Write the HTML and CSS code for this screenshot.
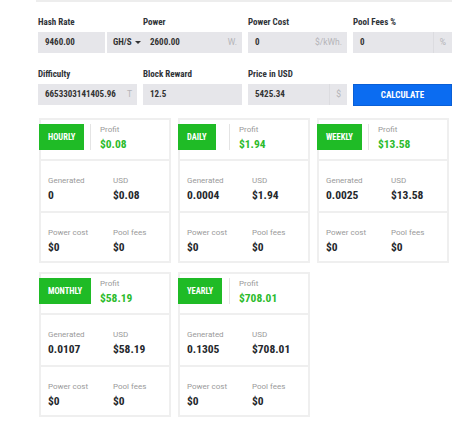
FILE: index.html
```html
<!DOCTYPE html>
<html>
<head>
<meta charset="utf-8">
<link rel="stylesheet" href="styles.css">
</head>
<body>
<div class="topline"></div>
<div class="form">
  <div class="field">
    <div class="label">Hash Rate</div>
    <div class="group">
      <div class="input grow">9460.00</div>
      <div class="select">GH/S <span class="caret"></span></div>
    </div>
  </div>
  <div class="field">
    <div class="label">Power</div>
    <div class="group">
      <div class="input grow">2600.00</div>
      <div class="addon">W.</div>
    </div>
  </div>
  <div class="field">
    <div class="label">Power Cost</div>
    <div class="group">
      <div class="input grow">0</div>
      <div class="addon">$/kWh.</div>
    </div>
  </div>
  <div class="field">
    <div class="label">Pool Fees %</div>
    <div class="group">
      <div class="input grow">0</div>
      <div class="addon sep">%</div>
    </div>
  </div>
  <div class="field">
    <div class="label">Difficulty</div>
    <div class="group">
      <div class="input grow">6653303141405.96</div>
      <div class="addon">T</div>
    </div>
  </div>
  <div class="field">
    <div class="label">Block Reward</div>
    <div class="group">
      <div class="input grow">12.5</div>
    </div>
  </div>
  <div class="field">
    <div class="label">Price in USD</div>
    <div class="group">
      <div class="input grow">5425.34</div>
      <div class="addon sep">$</div>
    </div>
  </div>
  <div class="field end">
    <div class="button">CALCULATE</div>
  </div>
</div>

<div class="cards">
  <div class="card">
    <div class="head">
      <div class="badge-wrap"><div class="badge">HOURLY</div></div>
      <div class="profit"><div class="small">Profit</div><div class="green">$0.08</div></div>
    </div>
    <div class="sec">
      <div class="cell"><div class="small">Generated</div><div class="val">0</div></div>
      <div class="cell"><div class="small">USD</div><div class="val">$0.08</div></div>
    </div>
    <div class="sec">
      <div class="cell"><div class="small">Power cost</div><div class="val">$0</div></div>
      <div class="cell"><div class="small">Pool fees</div><div class="val">$0</div></div>
    </div>
  </div>
  <div class="card">
    <div class="head">
      <div class="badge-wrap"><div class="badge">DAILY</div></div>
      <div class="profit"><div class="small">Profit</div><div class="green">$1.94</div></div>
    </div>
    <div class="sec">
      <div class="cell"><div class="small">Generated</div><div class="val">0.0004</div></div>
      <div class="cell"><div class="small">USD</div><div class="val">$1.94</div></div>
    </div>
    <div class="sec">
      <div class="cell"><div class="small">Power cost</div><div class="val">$0</div></div>
      <div class="cell"><div class="small">Pool fees</div><div class="val">$0</div></div>
    </div>
  </div>
  <div class="card">
    <div class="head">
      <div class="badge-wrap"><div class="badge">WEEKLY</div></div>
      <div class="profit"><div class="small">Profit</div><div class="green">$13.58</div></div>
    </div>
    <div class="sec">
      <div class="cell"><div class="small">Generated</div><div class="val">0.0025</div></div>
      <div class="cell"><div class="small">USD</div><div class="val">$13.58</div></div>
    </div>
    <div class="sec">
      <div class="cell"><div class="small">Power cost</div><div class="val">$0</div></div>
      <div class="cell"><div class="small">Pool fees</div><div class="val">$0</div></div>
    </div>
  </div>
  <div class="card">
    <div class="head">
      <div class="badge-wrap"><div class="badge">MONTHLY</div></div>
      <div class="profit"><div class="small">Profit</div><div class="green">$58.19</div></div>
    </div>
    <div class="sec">
      <div class="cell"><div class="small">Generated</div><div class="val">0.0107</div></div>
      <div class="cell"><div class="small">USD</div><div class="val">$58.19</div></div>
    </div>
    <div class="sec">
      <div class="cell"><div class="small">Power cost</div><div class="val">$0</div></div>
      <div class="cell"><div class="small">Pool fees</div><div class="val">$0</div></div>
    </div>
  </div>
  <div class="card">
    <div class="head">
      <div class="badge-wrap"><div class="badge">YEARLY</div></div>
      <div class="profit"><div class="small">Profit</div><div class="green">$708.01</div></div>
    </div>
    <div class="sec">
      <div class="cell"><div class="small">Generated</div><div class="val">0.1305</div></div>
      <div class="cell"><div class="small">USD</div><div class="val">$708.01</div></div>
    </div>
    <div class="sec">
      <div class="cell"><div class="small">Power cost</div><div class="val">$0</div></div>
      <div class="cell"><div class="small">Pool fees</div><div class="val">$0</div></div>
    </div>
  </div>
</div>
</body>
</html>
```

FILE: styles.css
```css
* { box-sizing: border-box; }
body {
  margin: 0;
  background: #fff;
  font-family: "Liberation Sans Narrow", "Roboto Condensed", Roboto, sans-serif;
  color: #333;
}
.topline {
  margin-left: 36px;
  width: 416px;
  height: 2px;
  background: #ededed;
}
.form {
  margin-left: 38px;
  width: 414px;
  padding-top: 14px;
  display: grid;
  grid-template-columns: repeat(4, minmax(0, 1fr));
  column-gap: 6px;
  row-gap: 15px;
}
.field { display: flex; flex-direction: column; min-width: 0; }
.field.end { justify-content: flex-end; }
.label {
  font-size: 9px;
  font-weight: bold;
  line-height: 12px;
  height: 12px;
  margin-bottom: 4px;
  color: #2f3338;
}
.group { display: flex; height: 21px; }
.input {
  background: #e6e6ea;
  font-size: 9px;
  font-weight: bold;
  line-height: 21px;
  padding-left: 7px;
  color: #333;
  white-space: nowrap;
  overflow: hidden;
}
.grow { flex: 1; min-width: 0; }
.select {
  width: 36px;
  flex-shrink: 0;
  margin-left: 2px;
  margin-right: -6px;
  background: #e6e6ea;
  font-size: 9px;
  font-weight: bold;
  line-height: 21px;
  padding-left: 6px;
  color: #333;
  white-space: nowrap;
  display: flex;
  align-items: center;
  gap: 3px;
}
.caret {
  width: 0; height: 0;
  border-left: 3px solid transparent;
  border-right: 3px solid transparent;
  border-top: 3px solid #333;
}
.addon {
  background: #e6e6ea;
  font-family: Roboto, sans-serif;
  font-size: 8.5px;
  color: #b4b4b8;
  line-height: 21px;
  padding: 0 5px 0 8px;
  white-space: nowrap;
}
.addon.sep {
  border-left: 1px solid #dcdce0;
  padding: 0 6px;
}
.button {
  height: 22px;
  margin-bottom: -1px;
  background: #0b6cf1;
  border: 1px solid #0a5fd6;
  color: #fff;
  font-size: 9px;
  font-weight: bold;
  line-height: 20px;
  text-align: center;
}
.cards {
  margin: 13px 0 0 39px;
  width: 410px;
  display: grid;
  grid-template-columns: repeat(3, minmax(0, 1fr));
  column-gap: 7px;
  row-gap: 9px;
}
.card {
  border: 2px solid #efefef;
  background: #fff;
  min-width: 0;
}
.head {
  height: 39px;
  display: flex;
  align-items: flex-start;
  padding-top: 4px;
}
.badge-wrap { width: 49px; flex-shrink: 0; }
.badge {
  position: relative;
  z-index: 1;
  margin-left: -2px;
  width: max-content;
  height: 26px;
  background: #1fbb26;
  color: #fff;
  font-size: 8.5px;
  font-weight: bold;
  line-height: 26px;
  padding: 0 9px;
}
.profit {
  border-left: 1px solid #e4e4e4;
  height: 26px;
  padding-left: 9px;
}
.small {
  font-family: Roboto, sans-serif;
  font-size: 8px;
  line-height: 10px;
  color: #9a9a9a;
}
.profit .small { margin-top: 1px; }
.green {
  font-size: 11.5px;
  font-weight: bold;
  line-height: 14px;
  margin-top: 2px;
  color: #2cbb2c;
}
.sec {
  border-top: 2px solid #efefef;
  height: 52px;
  display: flex;
  padding: 15px 0 0 7px;
}
.sec:last-child { height: 50px; }
.cell { width: 65px; flex-shrink: 0; }
.cell + .cell { flex: 1; width: auto; }
.val {
  font-size: 11.5px;
  font-weight: bold;
  line-height: 14px;
  margin-top: 2px;
  color: #25282c;
}
```
